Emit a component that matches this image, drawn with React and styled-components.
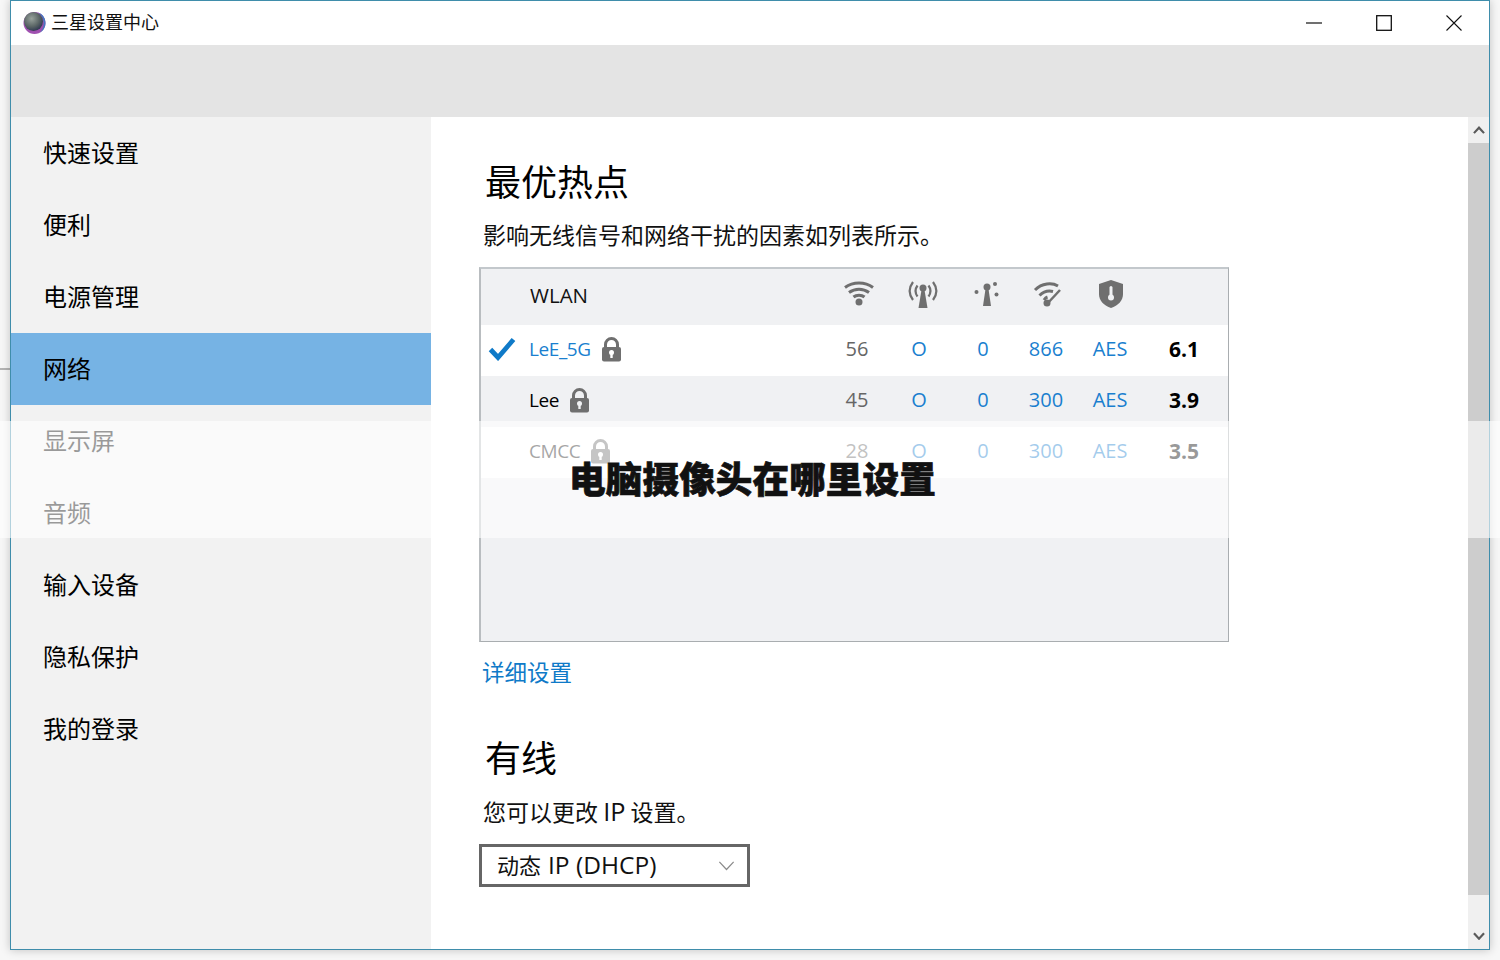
import React from 'react';
import styled, { createGlobalStyle } from 'styled-components';

const Global = createGlobalStyle`
  html, body { margin: 0; padding: 0; background: #f7f7f7; }
  body { font-family: "Open Sans", "Noto Sans CJK SC", sans-serif; overflow: hidden; }
  * { box-sizing: border-box; }
`;

const Page = styled.div`
  position: relative;
  width: 1500px;
  height: 960px;
  padding-left: 10px;
  overflow: hidden;
  background: #f7f7f7;
`;
const BackdropLine = styled.div`
  position: absolute;
  left: 0;
  top: 368px;
  width: 10px;
  height: 2px;
  background: #b4b4b4;
`;
const Window = styled.div`
  position: relative;
  width: 1480px;
  height: 950px;
  border: 1px solid #3f8dab;
  background: #fff;
  display: flex;
  flex-direction: column;
  box-shadow: 0 0 9px rgba(0, 0, 0, 0.22);
`;
const TitleBar = styled.header`
  height: 44px;
  display: flex;
  align-items: center;
  padding-left: 12px;
  background: #fff;
  flex: none;
`;
const TitleText = styled.span`
  margin-left: 5px;
  padding-bottom: 4px;
  font-size: 18px;
  color: #111;
  font-family: "Noto Sans CJK SC", sans-serif;
`;
const Controls = styled.div`
  margin-left: auto;
  display: flex;
`;
const ControlButton = styled.div`
  width: 70px;
  height: 44px;
  display: flex;
  align-items: center;
  justify-content: center;
`;
const Band = styled.div`
  height: 72px;
  background: #e4e4e4;
  flex: none;
`;
const Body = styled.div`
  flex: 1;
  display: flex;
  min-height: 0;
`;
const Sidebar = styled.nav`
  width: 420px;
  background: #f2f2f2;
  flex: none;
`;
const NavItem = styled.div`
  height: 72px;
  padding: 0 0 4px 32px;
  display: flex;
  align-items: center;
  font-family: "Noto Sans CJK SC", sans-serif;
  font-size: 24px;
  color: #000;
  background: ${p => (p.$active ? '#76b3e4' : 'transparent')};
`;
const Content = styled.main`
  flex: 1;
  padding: 39px 0 0 52px;
  background: #fff;
`;
const Heading = styled.h2`
  margin: 0 0 0 2px;
  font-family: "Noto Sans CJK SC", sans-serif;
  font-weight: 400;
  font-size: 36px;
  line-height: 48px;
  color: #000;
`;
const Paragraph = styled.p`
  margin: ${p => p.$top}px 0 0;
  font-family: "Noto Sans CJK SC", sans-serif;
  font-size: 23px;
  line-height: 32px;
  color: #111;
`;
const Latin = styled.span`
  font-family: "Open Sans", sans-serif;
  font-size: ${p => p.$size || '1.1em'};
`;
const Table = styled.div`
  margin: 17px 0 0 -4px;
  width: 750px;
  height: 375px;
  background: #f0f1f3;
  border: 1px solid #a9adb0;
  border-top: 2px solid #c3c8cc;
  border-left-width: 2px;
  border-left-color: #b9bdc0;
`;
const gridCols = '47px 298px 62px 62px 66px 60px 68px 80px';
const HeaderRow = styled.div`
  display: grid;
  grid-template-columns: ${gridCols};
  height: 56px;
  padding-bottom: 3px;
  align-items: center;
  font-size: 20.5px;
  color: #111;
`;
const Row = styled.div`
  display: grid;
  grid-template-columns: ${gridCols};
  height: 51px;
  padding-bottom: 4px;
  align-items: center;
  font-size: 20px;
  background: ${p => (p.$white ? '#fff' : 'transparent')};
`;
const Cell = styled.div`
  display: flex;
  justify-content: center;
  align-items: center;
  color: ${p => p.$color || '#1a7fcf'};
  font-weight: ${p => (p.$bold ? 700 : 400)};
  font-size: ${p => (p.$bold ? '21px' : '20px')};
`;
const NameCell = styled.div`
  display: flex;
  align-items: center;
  gap: 10px;
  margin-left: 1px;
  font-size: 19px;
  letter-spacing: -0.4px;
  color: ${p => p.$color};
`;
const HeaderName = styled.div`
  grid-column: 2;
  margin: 0 0 2px 2px;
`;
const HeaderIcon = styled.div`
  display: flex;
  margin: 0 0 ${p => p.$up || 3}px ${p => p.$shift || 0}px;
`;
const LockSvg = styled.svg`
  margin-top: 2px;
`;
const CheckSvg = styled.svg`
  margin-right: 5px;
`;
const Link = styled.a`
  display: block;
  margin: 13px 0 0 -1px;
  font-family: "Noto Sans CJK SC", sans-serif;
  font-size: 22.5px;
  line-height: 32px;
  color: #0f7ac8;
`;
const SectionHeading = styled(Heading)`
  margin-top: 45px;
`;
const Select = styled.div`
  margin: 17px 0 0 -4px;
  width: 271px;
  height: 43px;
  border: 3px solid #666;
  background: #fff;
  display: flex;
  align-items: center;
  gap: 7px;
  padding: 0 12px 3px 15px;
  font-family: "Noto Sans CJK SC", sans-serif;
  font-size: 22px;
  color: #111;
`;
const SelectArrow = styled.span`
  margin: 3px 0 0 auto;
  display: flex;
`;
const Scrollbar = styled.aside`
  width: 21px;
  background: #f0f0f0;
  display: flex;
  flex-direction: column;
  flex: none;
`;
const ScrollButton = styled.div`
  height: ${p => p.$h}px;
  padding-bottom: ${p => p.$pad || 0}px;
  display: flex;
  align-items: ${p => (p.$pad ? 'flex-end' : 'center')};
  justify-content: center;
  flex: none;
`;
const ScrollThumb = styled.div`
  height: 752px;
  background: #cdcdcd;
  flex: none;
`;
const Overlay = styled.div`
  position: absolute;
  left: 0;
  right: 0;
  top: 421px;
  height: 117px;
  background: rgba(255, 255, 255, 0.6);
  display: flex;
  align-items: center;
  justify-content: center;
  padding: 0 0 5px 5px;
  font-family: "Noto Sans CJK SC", sans-serif;
  font-weight: 900;
  font-size: 36.6px;
  letter-spacing: 0.1px;
  color: #111;
  -webkit-text-stroke: 0.7px #111;
`;

const G = '#6f6f6f';
const Logo = () => (
  <svg width="23" height="24" viewBox="0 0 23 24">
    <defs>
      <radialGradient id="lg" cx="40%" cy="35%" r="70%">
        <stop offset="0%" stopColor="#98a29c" />
        <stop offset="60%" stopColor="#5a6565" />
        <stop offset="100%" stopColor="#2b3450" />
      </radialGradient>
    </defs>
    <circle cx="11.500" cy="12" r="11" fill="#a050b0" />
    <path d="M15 1.600A11 11 0 0 1 22.500 12 11 11 0 0 1 17 21.500 13 13 0 0 0 15 1.600Z" fill="#4678c0" />
    <circle cx="10.500" cy="10.500" r="9.500" fill="url(#lg)" />
  </svg>
);
const Minimize = () => (
  <svg width="16" height="16" viewBox="0 0 16 16"><path d="M0 8h16" stroke="#111" strokeWidth="1.2" /></svg>
);
const Maximize = () => (
  <svg width="16" height="16" viewBox="0 0 16 16"><rect x=".7" y=".7" width="14.600" height="14.600" fill="none" stroke="#111" strokeWidth="1.3" /></svg>
);
const Close = () => (
  <svg width="16" height="16" viewBox="0 0 16 16"><path d="M.5.5l15 15M15.500.5l-15 15" stroke="#111" strokeWidth="1.1" /></svg>
);
const WifiIcon = () => (
  <svg width="32" height="28" viewBox="0 0 32 28" fill="none" stroke={G} strokeWidth="3">
    <path d="M2 8.500C10 2.500 22 2.500 30 8.500" />
    <path d="M6 13.500C12 9 20 9 26 13.500" />
    <path d="M10.500 18C13.500 15.500 18.500 15.500 21.500 18" />
    <circle cx="16" cy="23" r="3.500" fill={G} stroke="none" />
  </svg>
);
const AntennaIcon = () => (
  <svg width="32" height="30" viewBox="0 0 32 30" fill="none" stroke={G} strokeWidth="2.200">
    <path d="M6 3C1.500 9 1.500 15 6 21M26 3C30.500 9 30.500 15 26 21" />
    <path d="M10.500 6.500C8 10 8 14 10.500 17.500M21.500 6.500C24 10 24 14 21.500 17.500" />
    <circle cx="16" cy="9" r="3.500" fill={G} stroke="none" />
    <path d="M14.500 11h3l3 18h-9z" fill={G} stroke="none" />
  </svg>
);
const MastIcon = () => (
  <svg width="26" height="26" viewBox="0 0 26 26" fill={G}>
    <circle cx="2.500" cy="11" r="2" />
    <circle cx="13" cy="6" r="3.500" />
    <path d="M11.500 8h3l2.500 17h-8z" />
    <circle cx="21" cy="3" r="2" />
    <circle cx="22.500" cy="13.500" r="2" />
  </svg>
);
const GaugeIcon = () => (
  <svg width="30" height="26" viewBox="0 0 30 26" fill="none" stroke={G} strokeWidth="3">
    <path d="M2 9C9 2 19 1.500 25 5" />
    <path d="M6.500 14.500C11 10 16 9.500 20 10.500" />
    <path d="M11 19C12 17.500 13 16.500 14.500 16" />
    <path d="M14 23L27 9" strokeWidth="2.500" />
    <circle cx="14" cy="22" r="3.500" fill={G} stroke="none" />
  </svg>
);
const ShieldIcon = () => (
  <svg width="26" height="30" viewBox="0 0 26 30">
    <path d="M13 1L25 5V15C25 22 20 26.500 13 29C6 26.500 1 22 1 15V5Z" fill={G} />
    <rect x="11.500" y="7" width="3" height="10" rx="1.500" fill="#f0f1f3" />
    <circle cx="13" cy="18.500" r="3" fill="#f0f1f3" />
  </svg>
);
const LockIcon = ({ color = G, bg = '#fff' }) => (
  <LockSvg width="21" height="25" viewBox="0 0 21 25">
    <path d="M4.500 11V7.500a6 6 0 0 1 12 0V11" fill="none" stroke={color} strokeWidth="3" />
    <rect x="1" y="10" width="19" height="14.500" rx="2" fill={color} />
    <circle cx="10.500" cy="15.500" r="2.500" fill={bg} />
    <rect x="9.300" y="16" width="2.400" height="5" fill={bg} />
  </LockSvg>
);
const Check = () => (
  <CheckSvg width="28" height="24" viewBox="0 0 28 24" fill="none">
    <path d="M2.500 12.500L10 20.500L25.500 2.500" stroke="#0f7ac8" strokeWidth="4.800" />
  </CheckSvg>
);
const Chevron = ({ down, color = '#5a5a5a', size = 12, w = 2.600 }) => (
  <svg width={size} height={size * 0.7} viewBox="0 0 14 10" fill="none">
    <path d={down ? 'M1 1.500L7 8L13 1.500' : 'M1 8.500L7 2L13 8.500'} stroke={color} strokeWidth={w} />
  </svg>
);

const navItems = ['快速设置', '便利', '电源管理', '网络', '显示屏', '音频', '输入设备', '隐私保护', '我的登录'];
const rows = [
  { name: 'LeE_5G', nameColor: '#1a7fcf', white: true, check: true, lockBg: '#fff', v: ['56', 'O', '0', '866', 'AES', '6.1'] },
  { name: 'Lee', nameColor: '#000', white: false, lockBg: '#f0f1f3', v: ['45', 'O', '0', '300', 'AES', '3.9'] },
  { name: 'CMCC', nameColor: '#222', white: true, lockBg: '#fff', v: ['28', 'O', '0', '300', 'AES', '3.5'] },
];

export default function App() {
  return (
    <Page>
      <Global />
      <BackdropLine />
      <Window>
        <TitleBar>
          <Logo />
          <TitleText>三星设置中心</TitleText>
          <Controls>
            <ControlButton><Minimize /></ControlButton>
            <ControlButton><Maximize /></ControlButton>
            <ControlButton><Close /></ControlButton>
          </Controls>
        </TitleBar>
        <Band />
        <Body>
          <Sidebar>
            {navItems.map(n => <NavItem key={n} $active={n === '网络'}>{n}</NavItem>)}
          </Sidebar>
          <Content>
            <Heading>最优热点</Heading>
            <Paragraph $top={14}>影响无线信号和网络干扰的因素如列表所示。</Paragraph>
            <Table>
              <HeaderRow>
                <HeaderName>WLAN</HeaderName>
                <Cell><HeaderIcon $up={5} $shift={4}><WifiIcon /></HeaderIcon></Cell>
                <Cell><HeaderIcon $shift={8}><AntennaIcon /></HeaderIcon></Cell>
                <Cell><HeaderIcon $up={4} $shift={7}><MastIcon /></HeaderIcon></Cell>
                <Cell><HeaderIcon $shift={4}><GaugeIcon /></HeaderIcon></Cell>
                <Cell><HeaderIcon $shift={2}><ShieldIcon /></HeaderIcon></Cell>
              </HeaderRow>
              {rows.map(r => (
                <Row key={r.name} $white={r.white}>
                  <Cell>{r.check && <Check />}</Cell>
                  <NameCell $color={r.nameColor}>
                    {r.name}
                    <LockIcon bg={r.lockBg} />
                  </NameCell>
                  <Cell $color="#666">{r.v[0]}</Cell>
                  <Cell>{r.v[1]}</Cell>
                  <Cell>{r.v[2]}</Cell>
                  <Cell>{r.v[3]}</Cell>
                  <Cell>{r.v[4]}</Cell>
                  <Cell $bold $color="#000">{r.v[5]}</Cell>
                </Row>
              ))}
            </Table>
            <Link>详细设置</Link>
            <SectionHeading>有线</SectionHeading>
            <Paragraph $top={15}>您可以更改 <Latin>IP</Latin> 设置。</Paragraph>
            <Select>
              动态
              <Latin $size="24.5px">IP (DHCP)</Latin>
              <SelectArrow><Chevron down color="#8a8a8a" size={17} w={1} /></SelectArrow>
            </Select>
          </Content>
          <Scrollbar>
            <ScrollButton $h={26}><Chevron /></ScrollButton>
            <ScrollThumb />
            <ScrollButton $h={54} $pad={9}><Chevron down /></ScrollButton>
          </Scrollbar>
        </Body>
      </Window>
      <Overlay>电脑摄像头在哪里设置</Overlay>
    </Page>
  );
}
